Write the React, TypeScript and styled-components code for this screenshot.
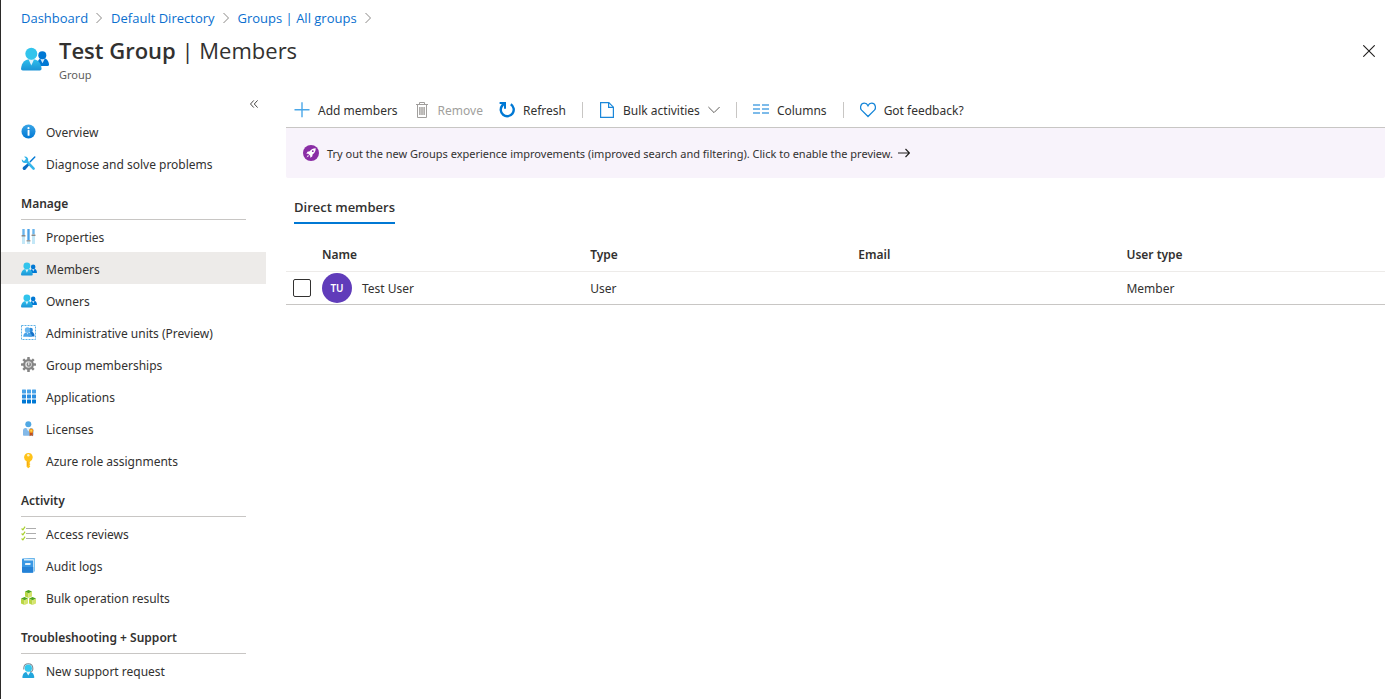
import React from "react";
import styled, { createGlobalStyle } from "styled-components";

const GlobalStyle = createGlobalStyle`
  *, *::before, *::after { box-sizing: border-box; }
  html, body { margin: 0; background: #fff; }
  body {
    font-family: "Noto Sans", "Open Sans", sans-serif;
    font-size: 12px;
    line-height: 20px;
    color: #323130;
  }
  button { font: inherit; color: inherit; background: none; border: 0; padding: 0; cursor: pointer; }
  a { text-decoration: none; }
  h1, h2, p, ul, ol { margin: 0; padding: 0; }
  ul, ol { list-style: none; }
`;

const headingFont = `"Open Sans", "Noto Sans", sans-serif`;

/* ---------- icons ---------- */

const Svg = styled.svg`
  display: block;
  flex: none;
`;

const PeopleIcon = ({ id, width, height }: { id: string; width: number; height: number }) => (
  <Svg width={width} height={height} viewBox="0 0 28 24" aria-hidden="true">
    <defs>
      <linearGradient id={`${id}-body`} x1="0" y1="0" x2="0" y2="1">
        <stop offset="0" stopColor="#2fc0ec" />
        <stop offset="1" stopColor="#1b93d6" />
      </linearGradient>
    </defs>
    <path d="M16 19h10.500q1.500 0 1.500-1.500C27.500 13.500 25.500 11 21.500 11c-3 0-5 2-5.500 8z" fill="#0078d4" />
    <path d="M19 11.300h5l-2.500 5z" fill="#cfe8fa" />
    <circle cx="21.300" cy="8.300" r="4" fill="#0078d4" />
    <path d="M1.800 23.500Q0 23.500 0 21.700C.8 15.500 3.500 12 10.300 12s9.500 3.500 10.300 9.700q0 1.800-1.800 1.800z" fill={`url(#${id}-body)`} />
    <path d="M7.500 12.200h5.600l-2.800 6.300z" fill="#dff3fc" />
    <circle cx="10.300" cy="6.800" r="6" fill="#32c4ec" />
  </Svg>
);

const NavPeople = ({ id }: { id: string }) => <PeopleIcon id={id} width={16} height={14} />;

const Icon16 = ({ children }: { children: React.ReactNode }) => (
  <Svg width="16" height="16" viewBox="0 0 16 16" aria-hidden="true">
    {children}
  </Svg>
);

const InfoIcon = () => (
  <Icon16>
    <defs>
      <linearGradient id="info-fill" x1="0" y1="0" x2="0" y2="1">
        <stop offset="0" stopColor="#3aa5e6" />
        <stop offset="1" stopColor="#0078d4" />
      </linearGradient>
    </defs>
    <circle cx="7.500" cy="7.500" r="7" fill="url(#info-fill)" />
    <circle cx="7.500" cy="4.200" r="1.100" fill="#fff" />
    <rect x="6.600" y="6" width="1.900" height="5.800" rx=".5" fill="#fff" />
  </Icon16>
);

const ToolsIcon = () => (
  <Icon16>
    <path d="M13.800 1 9.200 5.800" stroke="#0078d4" strokeWidth="1.400" strokeLinecap="round" />
    <path d="M7.500 6.800 9 8.300 4.600 13.400q-1.300 1.300-2.500.2t0-2.500z" fill="#0a6cc4" />
    <path d="M5 4.600 12.600 12.600" stroke="#32b4ea" strokeWidth="2.600" strokeLinecap="round" />
    <path d="M3.200.7 5.100 2.700 4.600 4.600 2.700 5 .8 3.200C.4 5.600 2.400 7.600 4.900 7L7.200 4.800C7.700 2.200 5.600.2 3.200.7z" fill="#32b4ea" />
  </Icon16>
);

const SlidersIcon = () => (
  <Icon16>
    <rect x="1" y="0" width="3" height="15" fill="#c3e7f7" />
    <rect x="6" y="0" width="3" height="15" fill="#c3e7f7" />
    <rect x="11" y="0" width="3" height="15" fill="#c3e7f7" />
    <rect x="1.500" y="0" width="2" height="6" fill="#6cb4ee" />
    <rect x="6.500" y="0" width="2" height="11" fill="#4b9fe8" />
    <rect x="11.500" y="0" width="2" height="5" fill="#6cb4ee" />
    <rect x=".5" y="6" width="4" height="1.500" rx=".5" fill="#8a8a8a" />
    <rect x="5.500" y="11" width="4" height="1.500" rx=".5" fill="#9a9a9a" />
    <rect x="10.500" y="5.500" width="4" height="1.500" rx=".5" fill="#8a8a8a" />
  </Icon16>
);

const AdminUnitsIcon = () => (
  <Icon16>
    <rect x=".5" y=".5" width="14" height="14" fill="none" stroke="#5fb2e6" strokeWidth="1" strokeDasharray="2 1" />
    <path d="M7.500 11.500h6c.2-3-1.200-5-4-5z" fill="#1471c9" />
    <circle cx="9.700" cy="5" r="2.200" fill="#2b88d8" />
    <path d="M2.200 11.800C2.300 9 3.800 7.300 6.500 7.300s4.300 1.700 4.500 4.500z" fill="#4aa3e8" />
    <path d="M5.500 7.400h2l-1 2.400z" fill="#c4e4f9" />
    <circle cx="6.500" cy="5" r="2.700" fill="#68b6f0" />
  </Icon16>
);

const GearIcon = () => (
  <Icon16>
    <g fill="#858585">
      <circle cx="7.500" cy="7.500" r="5.400" />
      {[0, 45, 90, 135].map((deg) => (
        <rect key={deg} x="6.200" y="0" width="2.600" height="15" rx=".6" transform={`rotate(${deg} 7.500 7.500)`} />
      ))}
    </g>
    <circle cx="7.500" cy="7.500" r="3.300" fill="#e0e0e0" />
    <circle cx="7.900" cy="7.500" r="2.200" fill="#858585" />
    <path d="M7.800 5.300v3" stroke="#fff" strokeWidth="1" />
  </Icon16>
);

const GridIcon = () => (
  <Icon16>
    {["#4aa3e8", "#2b8ee0", "#0078d4"].map((fill, row) =>
      [0, 1, 2].map((col) => (
        <rect key={`${row}-${col}`} x={1 + col * 5} y={0.5 + row * 5} width="4" height="4" rx=".4" fill={fill} />
      ))
    )}
  </Icon16>
);

const LicenseIcon = () => (
  <Icon16>
    <path d="M2 14V9.500Q2 7 4.500 7H10q2.500 0 2.500 2.500V14q0 .8-.8.8H2.800Q2 14.800 2 14z" fill="#83b9e8" />
    <path d="M5.300 7h4L7.300 10.500z" fill="#e8f4fc" />
    <circle cx="7.300" cy="3.300" r="3" fill="#50a8e4" />
    <path d="M8.600 10.500h3.200v4.800l-1.600-1-1.600 1z" fill="#c4501b" />
    <circle cx="10.200" cy="9.700" r="2.200" fill="#f59a1d" />
    <circle cx="10.200" cy="9.700" r="1" fill="#ffd84a" />
  </Icon16>
);

const KeyIcon = () => (
  <Icon16>
    <path
      d="M7.300 0a4.300 4.300 0 0 1 1.900 8.200v.9l-.9.8.9.8v.8l-.9.8.9.8-.1.600-1.800 1.500-1.700-1.500V8.200A4.300 4.300 0 0 1 7.300 0z"
      fill="#ffc31a"
    />
    <circle cx="7.300" cy="2.300" r="1.200" fill="#fff3c4" />
    <path d="M6.700 8.600v4.200" stroke="#ef9b12" strokeWidth=".8" />
  </Icon16>
);

const ChecklistIcon = () => (
  <Icon16>
    {[2.5, 7.5, 12.500].map((y) => (
      <g key={y}>
        <path d={`M.6 ${y}l1.300 1.300L4.100 ${y - 1.8}`} fill="none" stroke="#a9d02c" strokeWidth="1.200" />
        <path d={`M5 ${y}H15`} stroke="#adadad" strokeWidth="1" />
      </g>
    ))}
  </Icon16>
);

const BookIcon = () => (
  <Icon16>
    <path d="M2.500.3H14V13l-1 1V1.500z" fill="#7cc4f0" />
    <path d="M1 1.500Q1 .5 2 .5h11.500v.8H3v1h9.300V14q0 .8-.8.8H2q-1 0-1-1z" fill="#3a98e4" />
    <path d="M1 9h11.300v5q0 .8-.8.8H2q-1 0-1-1z" fill="#1b78d0" opacity=".7" />
    <path d="M3 1.300h9.500v1H3z" fill="#d6effc" />
    <rect x="4" y="5" width="5.500" height="2" rx=".4" fill="#e8f5fd" />
  </Icon16>
);

const Cube = ({ x, y }: { x: number; y: number }) => (
  <g transform={`translate(${x} ${y})`}>
    <path d="M0 1.600 3.500 3.200V8L0 6.400z" fill="#b9d643" />
    <path d="M7 1.600 3.500 3.200V8L7 6.400z" fill="#d5e46e" />
    <path d="M3.500 0 7 1.600 3.500 3.300 0 1.600z" fill="#52a51f" />
  </g>
);

const CubesIcon = () => (
  <Icon16>
    <Cube x={4} y={0} />
    <Cube x={0} y={7} />
    <Cube x={8} y={7} />
  </Icon16>
);

const SupportIcon = () => (
  <Icon16>
    <path d="M2.800 6.500V5Q3 .7 7.300.7T11.800 5v1.500q-.2 2-2.600 2.300" fill="none" stroke="#7c8a94" strokeWidth="1.100" />
    <path d="M1.300 14.200C1.800 10.300 3.600 8.700 7.300 8.700s5.500 1.600 6 5.500q0 .8-.8.8H2q-.8 0-.7-.8z" fill="#20a5dc" />
    <path d="M5.200 8.900h4.200L7.300 12.600z" fill="#e6f7fd" />
    <circle cx="7.300" cy="5.200" r="3.600" fill="#32c8ee" />
  </Icon16>
);

const PlusIcon = () => (
  <Icon16>
    <path d="M8 .2v15M.5 7.700h15" stroke="#4ba7e8" strokeWidth="1.400" fill="none" />
  </Icon16>
);

const TrashIcon = () => (
  <Icon16>
    <path d="M5.500 2.500v-2h5v2M2 2.500h12M3.500 2.500v13h9v-13" fill="none" stroke="#a19f9d" />
    <rect x="5" y="5" width="6" height="8" fill="#c8c6c4" />
    <path d="M5.500 5v8M8 5v8M10.500 5v8" stroke="#b0aeac" />
  </Icon16>
);

const RefreshIcon = () => (
  <Icon16>
    <path d="M11.800 2.300A6.500 6.500 0 1 1 3.400 3.400" fill="none" stroke="#0078d4" strokeWidth="2.400" />
    <path d="M.6 0h6.400v6.700H5V3.600L3.400 5 1.800 3.400 3 2H.6z" fill="#0078d4" />
  </Icon16>
);

const DocumentIcon = () => (
  <Icon16>
    <path d="M1.600.6h8.200l4.600 4.600v10.200H1.600z" fill="none" stroke="#1b87d9" strokeWidth="1.200" />
    <path d="M9.600.6v4.800h4.700" fill="none" stroke="#1b87d9" strokeWidth="1.200" />
  </Icon16>
);

const ColumnsIcon = () => (
  <Icon16>
    {[2, 6, 10].map((y) => (
      <path key={y} d={`M0 ${y + 1}h7M9 ${y + 1}h7`} stroke="#7dbbea" strokeWidth="2" />
    ))}
  </Icon16>
);

const HeartIcon = () => (
  <Icon16>
    <path
      d="M8 14.500 1.600 8.100C-.3 6 .5 1.200 4.300 1.200 6.400 1.200 7.500 2.600 8 3.700c.5-1.100 1.600-2.500 3.700-2.500 3.800 0 4.600 4.800 2.700 6.900z"
      fill="none"
      stroke="#1585d8"
      strokeWidth="1.300"
    />
  </Icon16>
);

const ChevronDown = () => (
  <Svg width="12" height="8" viewBox="0 0 12 8" aria-hidden="true">
    <path d="M.4 1 6 6.600 11.600 1" fill="none" stroke="#605e5c" />
  </Svg>
);

const ChevronRight = () => (
  <Svg width="6" height="12" viewBox="0 0 6 12" aria-hidden="true">
    <path d="M.5 1 5.500 6 .5 11" fill="none" stroke="#8a8886" />
  </Svg>
);

const CollapseIcon = () => (
  <Svg width="8" height="8" viewBox="0 0 8 8" aria-hidden="true">
    <path d="M3.800.4.500 4l3.300 3.600M7.600.4 4.300 4l3.300 3.600" fill="none" stroke="#484644" />
  </Svg>
);

const CloseIcon = () => (
  <Svg width="12" height="12" viewBox="0 0 12 12" aria-hidden="true">
    <path d="M.3.3l11.400 11.400M11.700.3.300 11.700" stroke="#201f1e" strokeWidth="1.100" />
  </Svg>
);

const RocketIcon = () => (
  <Icon16>
    <circle cx="8" cy="8" r="8" fill="#8a2da5" />
    <path d="M12.700 3.200c-2.700.1-4.500 1-6 3.100L4.500 6.800 3.300 8.700l1.900.1 2 2 .1 1.900 1.900-1.200.5-2.200c2.100-1.500 3-3.400 3-6.100z" fill="#fff" />
    <path d="M5 10 3.500 12.500 6 11z" fill="#fff" />
    <circle cx="9.800" cy="6.200" r=".9" fill="#8a2da5" />
  </Icon16>
);

const ArrowIcon = () => (
  <Svg width="12" height="10" viewBox="0 0 12 10" aria-hidden="true">
    <path d="M0 5h11.300M7.500 1l4 4-4 4" fill="none" stroke="#201f1e" strokeWidth="1.200" />
  </Svg>
);

/* ---------- page frame ---------- */

const Page = styled.div`
  min-height: 100vh;
  display: flex;
  flex-direction: column;
  border-left: 1px solid #2b2a29;
`;

const Breadcrumb = styled.ol`
  display: flex;
  align-items: center;
  height: 36px;
  padding-left: 20px;
  font-family: ${headingFont};
  font-size: 13px;
`;

const Crumb = styled.li`
  display: flex;
  align-items: center;
  gap: 8px;
  margin-right: 9px;

  a { color: #0a6fcf; }
`;

const Header = styled.header`
  display: flex;
  align-items: flex-start;
  height: 52px;
  padding: 0 22px 0 20px;
`;

const HeaderIcon = styled.div`
  padding-top: 11px;
  margin-right: 10px;
`;

const Title = styled.h1`
  font-family: ${headingFont};
  font-size: 22px;
  line-height: 28px;
  font-weight: 400;

  strong { font-weight: 600; }
`;

const Subtitle = styled.p`
  font-size: 11px;
  line-height: 22px;
  color: #605e5c;
`;

const CloseButton = styled.button`
  margin: 9px 0 0 auto;
`;

const Body = styled.div`
  display: flex;
  flex: 1;
`;

/* ---------- sidebar ---------- */

const Sidebar = styled.nav`
  flex: none;
  width: 265px;
`;

const CollapseRow = styled.div`
  display: flex;
  justify-content: flex-end;
  align-items: center;
  height: 27px;
  padding: 4px 8px 0 0;
`;

const SectionTitle = styled.h2`
  height: 41px;
  margin: 0 20px;
  padding-top: 15px;
  border-bottom: 1px solid #c8c6c4;
  font-size: 12px;
  line-height: 20px;
  font-weight: 600;
`;

const NavLink = styled.a<{ $active?: boolean }>`
  display: flex;
  align-items: center;
  gap: 9px;
  height: 32px;
  padding: 2px 0 0 20px;
  color: #323130;
  background: ${(p) => (p.$active ? "#edebe9" : "transparent")};

  span { padding-top: 2px; }
`;

/* ---------- main ---------- */

const Main = styled.main`
  flex: 1;
  min-width: 0;
  margin: 0 12px 0 20px;
`;

const Toolbar = styled.div`
  display: flex;
  align-items: center;
  height: 40px;
  padding-top: 4px;
  border-bottom: 1px solid #c8c6c4;
`;

const ToolButton = styled.button`
  display: flex;
  align-items: center;
  gap: 8px;
  padding: 0 8px;
  white-space: nowrap;

  span { padding-top: 2px; }
  &:disabled { color: #a19f9d; cursor: default; }
`;

const Divider = styled.span`
  width: 1px;
  height: 16px;
  margin: 0 8px;
  background: #c8c6c4;
`;

const Banner = styled.button`
  display: flex;
  align-items: center;
  width: 100%;
  height: 50px;
  padding: 0 17px;
  border-radius: 0 0 2px 2px;
  background: #f8f3fb;
  font-size: 11px;
  text-align: left;

  span { margin: 2px 5px 0 8px; }
`;

const Tabs = styled.div`
  display: flex;
  padding: 17px 8px 0;
`;

const Tab = styled.button`
  height: 29px;
  padding-bottom: 4px;
  border-bottom: 2px solid #0078d4;
  font-family: ${headingFont};
  font-size: 13px;
  font-weight: 600;
`;

const Table = styled.table`
  width: 100%;
  margin-top: 14px;
  table-layout: fixed;
  border-collapse: collapse;
`;

const HeadCell = styled.th<{ $width?: string }>`
  width: ${(p) => p.$width ?? "auto"};
  height: 33px;
  padding: 2px 0 0;
  border-bottom: 1px solid #edebe9;
  font-weight: 600;
  text-align: left;
`;

const Cell = styled.td`
  height: 33px;
  padding: 0;
  border-bottom: 1px solid #c8c6c4;

  > span { display: block; padding-top: 2px; }
`;

const Checkbox = styled.input`
  display: block;
  appearance: none;
  width: 18px;
  height: 18px;
  margin: 0 0 0 7px;
  border: 1px solid #323130;
  border-radius: 2px;
  background: #fff;

  &:checked { background: #0078d4; }
`;

const Persona = styled.div`
  display: flex;
  align-items: center;
  gap: 10px;
`;

const PersonaName = styled.span`
  padding-top: 2px;
`;

const Avatar = styled.span`
  display: grid;
  place-items: center;
  width: 30px;
  height: 30px;
  border-radius: 50%;
  background: #603cba;
  color: #fff;
  font-size: 10px;
  font-weight: 600;
`;

const crumbs = ["Dashboard", "Default Directory", "Groups | All groups"];

type NavItem = { label: string; icon: React.ReactNode; active?: boolean };

const sections: { title: string; items: NavItem[] }[] = [
  {
    title: "",
    items: [
      { label: "Overview", icon: <InfoIcon /> },
      { label: "Diagnose and solve problems", icon: <ToolsIcon /> },
    ],
  },
  {
    title: "Manage",
    items: [
      { label: "Properties", icon: <SlidersIcon /> },
      { label: "Members", icon: <NavPeople id="members" />, active: true },
      { label: "Owners", icon: <NavPeople id="owners" /> },
      { label: "Administrative units (Preview)", icon: <AdminUnitsIcon /> },
      { label: "Group memberships", icon: <GearIcon /> },
      { label: "Applications", icon: <GridIcon /> },
      { label: "Licenses", icon: <LicenseIcon /> },
      { label: "Azure role assignments", icon: <KeyIcon /> },
    ],
  },
  {
    title: "Activity",
    items: [
      { label: "Access reviews", icon: <ChecklistIcon /> },
      { label: "Audit logs", icon: <BookIcon /> },
      { label: "Bulk operation results", icon: <CubesIcon /> },
    ],
  },
  {
    title: "Troubleshooting + Support",
    items: [{ label: "New support request", icon: <SupportIcon /> }],
  },
];

export default function App() {
  return (
    <Page>
      <GlobalStyle />
      <Breadcrumb aria-label="Breadcrumb">
        {crumbs.map((crumb) => (
          <Crumb key={crumb}>
            <a href="#">{crumb}</a>
            <ChevronRight />
          </Crumb>
        ))}
      </Breadcrumb>

      <Header>
        <HeaderIcon>
          <PeopleIcon id="title" width={28} height={24} />
        </HeaderIcon>
        <div>
          <Title>
            <strong>Test Group</strong> | Members
          </Title>
          <Subtitle>Group</Subtitle>
        </div>
        <CloseButton aria-label="Close">
          <CloseIcon />
        </CloseButton>
      </Header>

      <Body>
        <Sidebar aria-label="Group">
          <CollapseRow>
            <button aria-label="Collapse menu">
              <CollapseIcon />
            </button>
          </CollapseRow>
          {sections.map((section) => (
            <section key={section.title}>
              {section.title && <SectionTitle>{section.title}</SectionTitle>}
              <ul>
                {section.items.map((item) => (
                  <li key={item.label}>
                    <NavLink href="#" $active={item.active} aria-current={item.active ? "page" : undefined}>
                      {item.icon}
                      <span>{item.label}</span>
                    </NavLink>
                  </li>
                ))}
              </ul>
            </section>
          ))}
        </Sidebar>

        <Main>
          <Toolbar role="toolbar">
            <ToolButton><PlusIcon /><span>Add members</span></ToolButton>
            <ToolButton disabled><TrashIcon /><span>Remove</span></ToolButton>
            <ToolButton><RefreshIcon /><span>Refresh</span></ToolButton>
            <Divider />
            <ToolButton><DocumentIcon /><span>Bulk activities</span><ChevronDown /></ToolButton>
            <Divider />
            <ToolButton><ColumnsIcon /><span>Columns</span></ToolButton>
            <Divider />
            <ToolButton><HeartIcon /><span>Got feedback?</span></ToolButton>
          </Toolbar>

          <Banner>
            <RocketIcon />
            <span>
              Try out the new Groups experience improvements (improved search and filtering). Click to enable the
              preview.
            </span>
            <ArrowIcon />
          </Banner>

          <Tabs role="tablist">
            <Tab role="tab" aria-selected="true">Direct members</Tab>
          </Tabs>

          <Table>
            <thead>
              <tr>
                <HeadCell $width="36px" aria-label="Select" />
                <HeadCell $width="24.4%">Name</HeadCell>
                <HeadCell $width="24.4%">Type</HeadCell>
                <HeadCell $width="24.4%">Email</HeadCell>
                <HeadCell>User type</HeadCell>
              </tr>
            </thead>
            <tbody>
              <tr>
                <Cell><Checkbox type="checkbox" aria-label="Select Test User" /></Cell>
                <Cell>
                  <Persona>
                    <Avatar aria-hidden="true">TU</Avatar>
                    <PersonaName>Test User</PersonaName>
                  </Persona>
                </Cell>
                <Cell><span>User</span></Cell>
                <Cell />
                <Cell><span>Member</span></Cell>
              </tr>
            </tbody>
          </Table>
        </Main>
      </Body>
    </Page>
  );
}
